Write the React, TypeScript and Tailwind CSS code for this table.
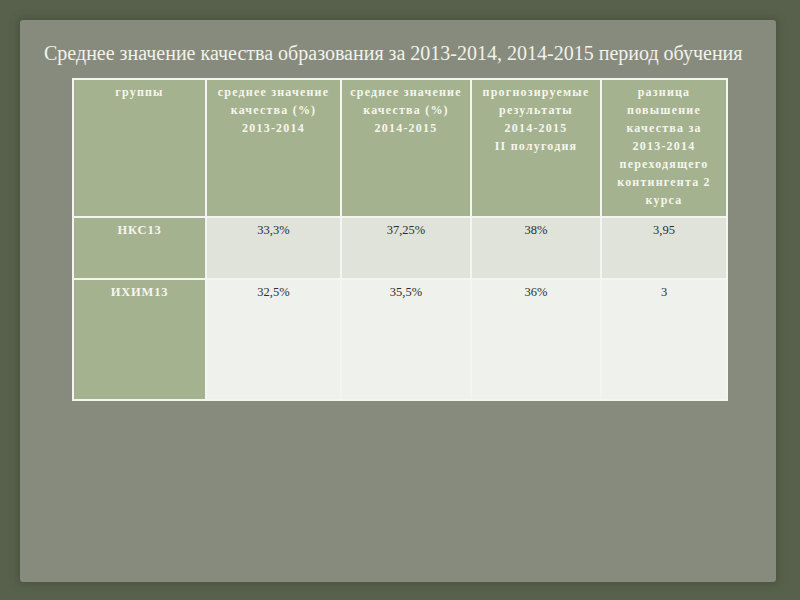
import { Fragment } from "react";

const headers = [
  ["группы"],
  ["среднее значение", "качества (%)", "2013-2014"],
  ["среднее значение", "качества (%)", "2014-2015"],
  ["прогнозируемые", "результаты", "2014-2015", "II полугодия"],
  ["разница", "повышение", "качества за", "2013-2014", "переходящего", "контингента 2", "курса"],
];

const rows = [
  { group: "НКС13", values: ["33,3%", "37,25%", "38%", "3,95"], bg: "bg-[#dfe3da]", h: "h-[60px]" },
  { group: "ИХИМ13", values: ["32,5%", "35,5%", "36%", "3"], bg: "bg-[#eff1ec]", h: "h-[119px]" },
];

export default function App() {
  return (
    <div className="h-[600px] w-[800px] bg-[#58614c] pt-[20px] pl-[20px] pr-[24px] pb-[18px]">
      <div className="flex h-full flex-col rounded-[3px] bg-[#878b7e] pl-[24px] shadow-[0_0_6px_3px_rgba(70,78,60,0.6)]">
        <h1 className="mt-[21px] font-['Liberation_Serif',serif] text-[20px] leading-[24px] text-[#f2f2ea]">
          Среднее значение качества образования за 2013-2014, 2014-2015 период обучения
        </h1>
        <div className="ml-[28px] mt-[13px] grid w-[656px] grid-cols-[131px_133px_128px_128px_124px] gap-[2px] border-2 border-[#f4f5f0] bg-[#f4f5f0] font-['Liberation_Serif',serif]">
          {headers.map((lines, i) => (
            <div key={i} className="flex h-[136px] flex-col items-center bg-[#a4b28f] pt-[3px] text-[12px] font-bold leading-[18px] tracking-[1.2px] text-[#f6f6ee]">
              {lines.map((l) => (
                <span key={l} className="whitespace-nowrap">{l}</span>
              ))}
            </div>
          ))}
          {rows.map((r) => (
            <Fragment key={r.group}>
              <div className={`${r.h} bg-[#a4b28f] pt-[3px] text-center text-[12.5px] font-bold tracking-[0.8px] text-[#f6f6ee]`}>
                {r.group}
              </div>
              {r.values.map((v, j) => (
                <div key={j} className={`${r.h} ${r.bg} pt-[3px] text-center text-[12.5px] text-[#2e2e2a]`}>
                  {v}
                </div>
              ))}
            </Fragment>
          ))}
        </div>
      </div>
    </div>
  );
}
